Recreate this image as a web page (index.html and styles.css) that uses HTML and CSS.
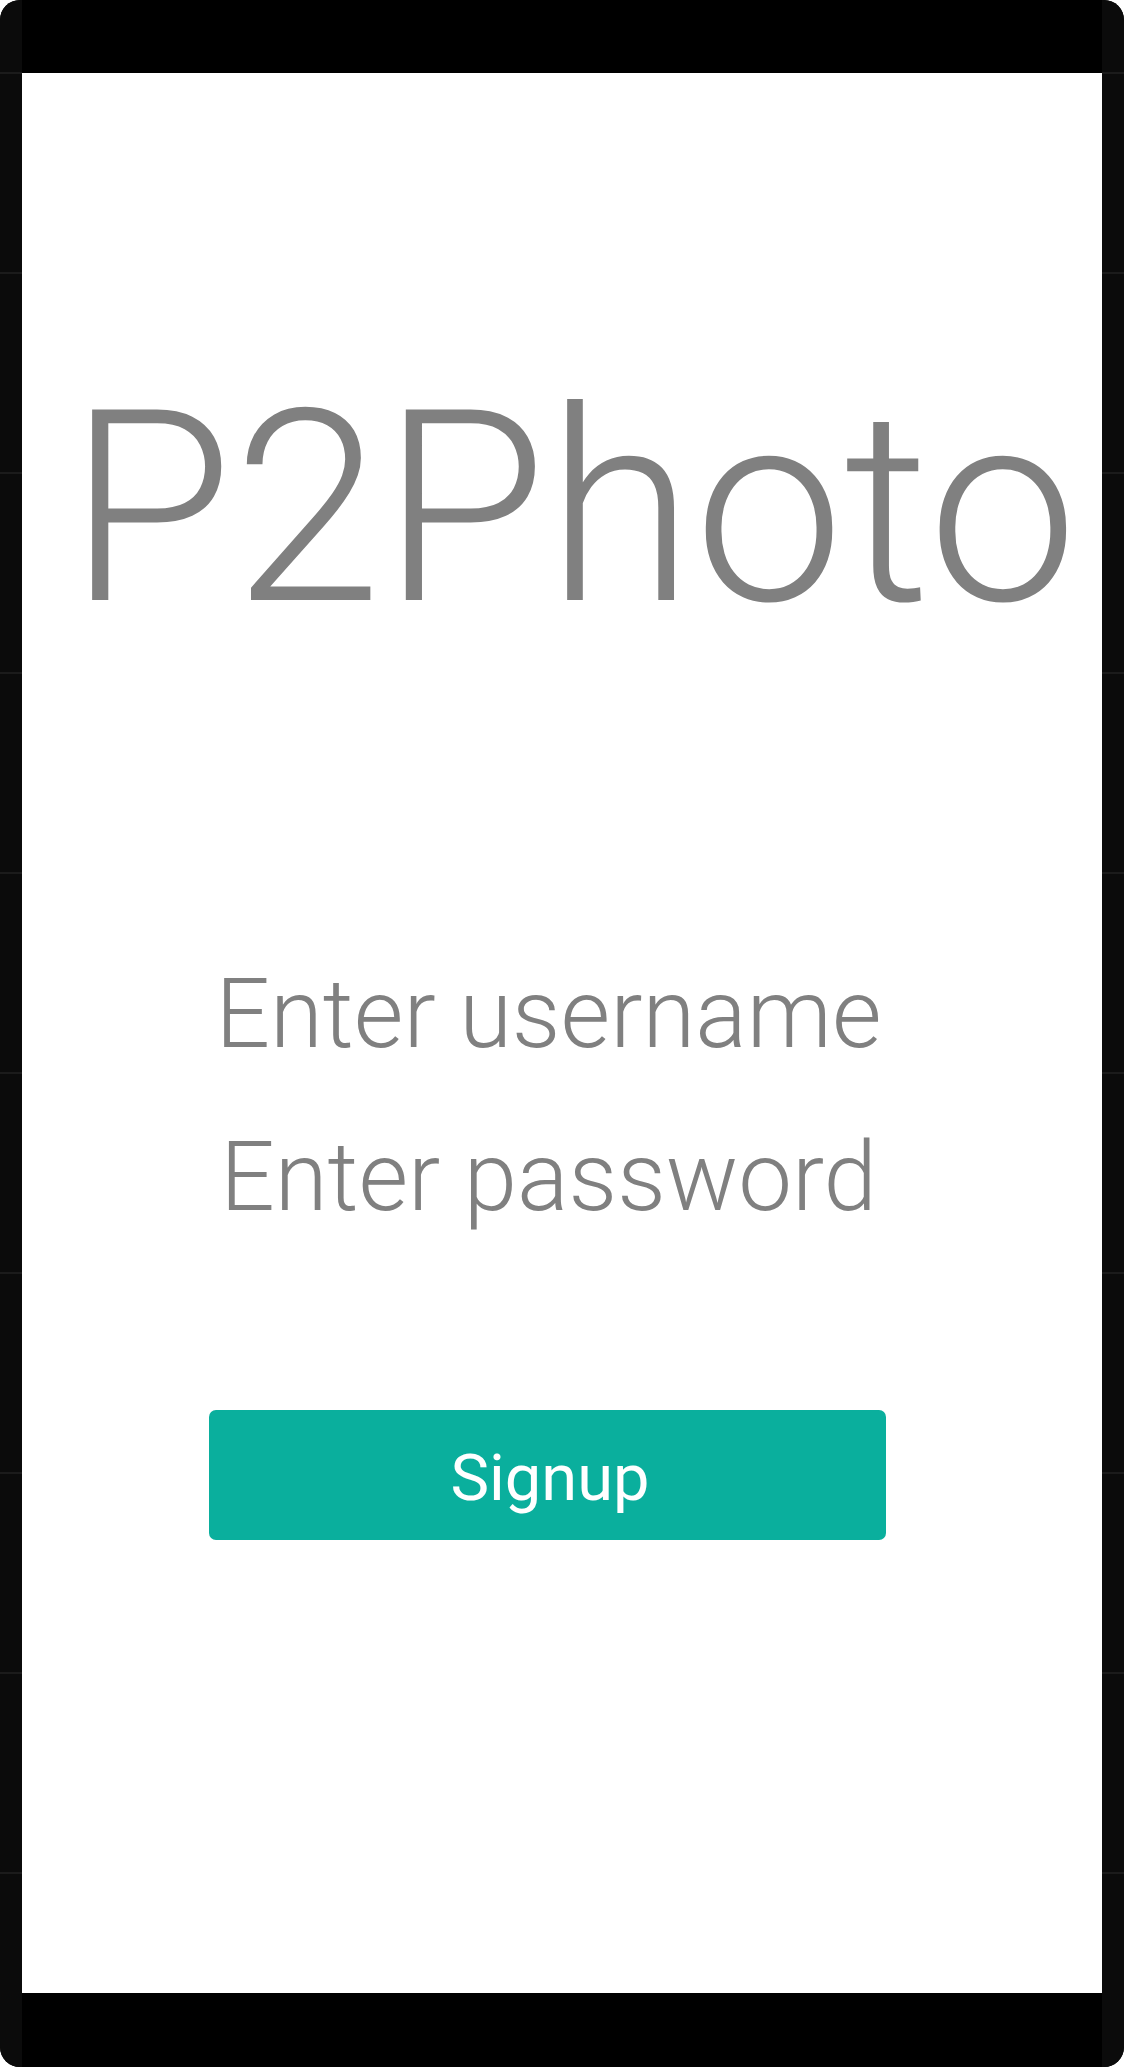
FILE: index.html
```html
<!DOCTYPE html>
<html lang="en">
<head>
<meta charset="utf-8">
<title>P2Photo</title>
<link rel="stylesheet" href="styles.css">
</head>
<body>
<div class="device">
  <div class="side"></div>
  <div class="middle">
    <div class="bar bar-top"></div>
    <main class="screen">
      <h1 class="title">P2Photo</h1>
      <div class="form">
        <div class="field">Enter username</div>
        <div class="field">Enter password</div>
        <button class="signup" type="button">Signup</button>
      </div>
    </main>
    <div class="bar bar-bottom"></div>
  </div>
  <div class="side"></div>
</div>
</body>
</html>
```

FILE: styles.css
```css
html, body {
  margin: 0;
  padding: 0;
  background: #ffffff;
}

.device {
  width: 1124px;
  height: 2067px;
  display: flex;
  flex-direction: row;
  border-radius: 20px;
  overflow: hidden;
  background: #0b0b0b;
}

.side {
  width: 22px;
  flex: 0 0 22px;
  background-color: #0b0b0b;
  background-image: repeating-linear-gradient(
    to bottom,
    transparent 0px,
    transparent 72px,
    #1b1b1b 72px,
    #1b1b1b 74px,
    transparent 74px,
    transparent 200px
  );
}

.middle {
  flex: 1;
  display: flex;
  flex-direction: column;
}

.bar {
  background: #000000;
}

.bar-top {
  height: 73px;
}

.bar-bottom {
  height: 74px;
}

.screen {
  height: 1920px;
  background: #ffffff;
  display: flex;
  flex-direction: column;
  font-family: Roboto, "Liberation Sans", sans-serif;
  color: #808080;
}

.title {
  margin: 285px 0 0 46px;
  font-size: 268px;
  font-weight: 300;
  line-height: 300px;
  white-space: nowrap;
}

.form {
  margin: 275px 0 0 187px;
  width: 677px;
  display: flex;
  flex-direction: column;
  align-items: center;
}

.field {
  font-size: 96px;
  font-weight: 300;
  line-height: 163px;
  white-space: nowrap;
  padding-left: 2px;
}

.signup {
  margin-top: 151px;
  width: 677px;
  height: 130px;
  border: none;
  border-radius: 7px;
  background: #0aaf9d;
  color: #ffffff;
  font-family: Roboto, "Liberation Sans", sans-serif;
  font-size: 65px;
  font-weight: 400;
  line-height: 130px;
  padding: 3px 0 0 5px;
}
```
